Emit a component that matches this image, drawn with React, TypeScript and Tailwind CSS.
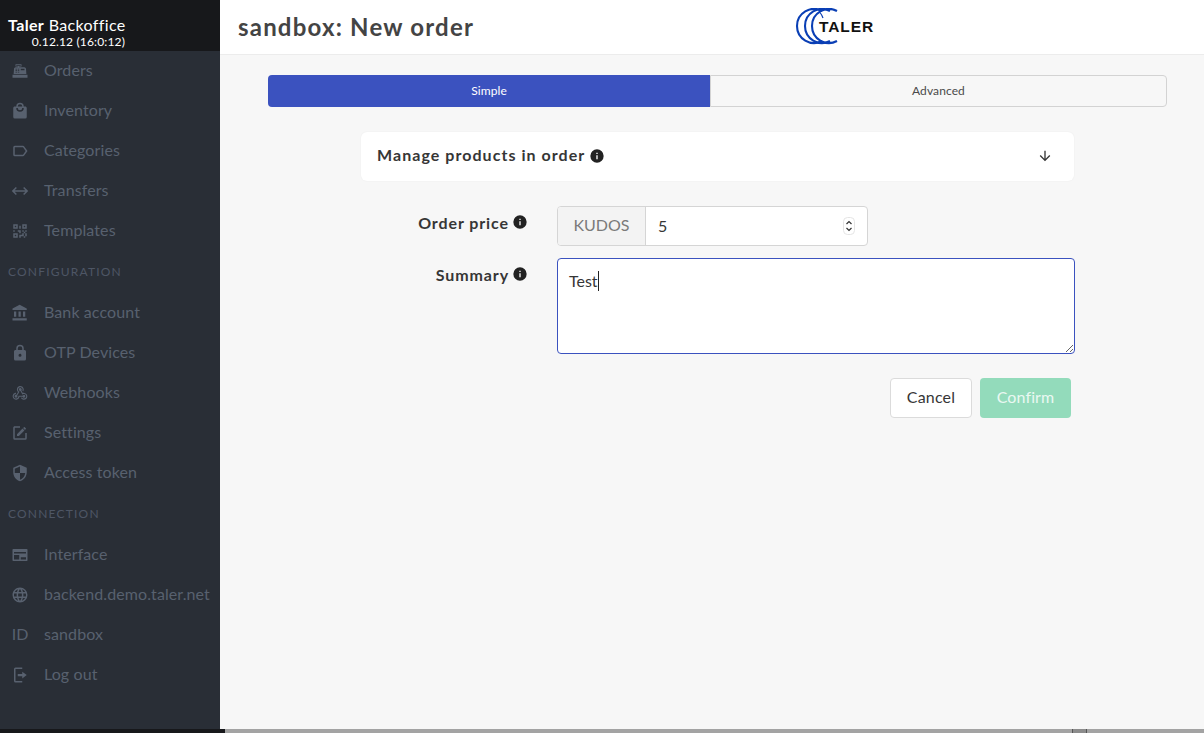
const paths = {
  orders:
    "M2,17H22V21H2V17M6.25,7H9V6H6V3H14V6H11V7H17.8C18.8,7 19.8,8 20,9L20.5,16H3.5L4.05,9C4.05,8 5.05,7 6.25,7M13,9V11H18V9H13M6,9V10H8V9H6M9,9V10H11V9H9M6,11V12H8V11H6M9,11V12H11V11H9M6,13V14H8V13H6M9,13V14H11V13H9M7,4V5H13V4H7Z",
  inventory:
    "M12,13A5,5 0 0,1 7,8H9A3,3 0 0,0 12,11A3,3 0 0,0 15,8H17A5,5 0 0,1 12,13M12,3A3,3 0 0,1 15,6H9A3,3 0 0,1 12,3M19,6H17A5,5 0 0,0 12,1A5,5 0 0,0 7,6H5C3.89,6 3,6.89 3,8V20A2,2 0 0,0 5,22H19A2,2 0 0,0 21,20V8C21,6.89 20.1,6 19,6Z",
  categories:
    "M17.63,5.84C17.27,5.33 16.67,5 16,5H5A2,2 0 0,0 3,7V17A2,2 0 0,0 5,19H16C16.67,19 17.27,18.66 17.63,18.15L22,12L17.63,5.84M16,17H5V7H16L19.55,12L16,17Z",
  transfers:
    "M6.45,17.45L1,12L6.45,6.55L7.86,7.96L4.83,11H19.17L16.14,7.96L17.55,6.55L23,12L17.55,17.45L16.14,16.04L19.17,13H4.83L7.86,16.04L6.45,17.45Z",
  templates:
    "M3,11H5V13H3V11M11,5H13V9H11V5M9,11H13V15H11V13H9V11M15,11H17V13H19V11H21V13H19V15H21V19H19V21H17V19H13V21H11V17H15V15H17V13H15V11M19,19V15H17V19H19M15,3H21V9H15V3M17,5V7H19V5H17M3,3H9V9H3V3M5,5V7H7V5H5M3,15H9V21H3V15M5,17V19H7V17H5Z",
  bank: "M11.5,1L2,6V8H21V6M16,10V17H19V10M2,22H21V19H2M10,10V17H13V10M4,10V17H7V10H4Z",
  lock: "M12,17A2,2 0 0,0 14,15C14,13.89 13.1,13 12,13A2,2 0 0,0 10,15A2,2 0 0,0 12,17M18,8A2,2 0 0,1 20,10V20A2,2 0 0,1 18,22H6A2,2 0 0,1 4,20V10C4,8.89 4.9,8 6,8H7V6A5,5 0 0,1 12,1A5,5 0 0,1 17,6V8H18M12,3A3,3 0 0,0 9,6V8H15V6A3,3 0 0,0 12,3Z",
  webhook:
    "M10.46,19C9,21.07 6.15,21.59 4.09,20.15C2.04,18.71 1.56,15.84 3,13.75C3.87,12.5 5.21,11.83 6.58,11.77L6.63,13.2C5.72,13.27 4.84,13.74 4.27,14.56C3.27,16 3.58,17.94 4.95,18.91C6.33,19.87 8.26,19.5 9.26,18.07C9.57,17.62 9.75,17.13 9.82,16.63V15.62L15.4,15.58L15.47,15.47C16,14.55 17.15,14.23 18.05,14.75C18.95,15.27 19.26,16.43 18.73,17.35C18.2,18.26 17.04,18.58 16.14,18.06C15.73,17.83 15.44,17.46 15.31,17.04L11.24,17.06C11.13,17.73 10.87,18.38 10.46,19M17.74,11.86C20.27,12.17 22.07,14.44 21.76,16.93C21.45,19.43 19.15,21.2 16.62,20.89C15.13,20.71 13.9,19.86 13.19,18.68L14.43,17.96C14.92,18.73 15.75,19.28 16.75,19.41C18.5,19.62 20.05,18.43 20.26,16.76C20.47,15.09 19.23,13.56 17.5,13.35C16.96,13.29 16.44,13.36 15.97,13.53L15.12,13.97L12.54,9.2H12.32C11.26,9.16 10.44,8.29 10.47,7.25C10.5,6.21 11.4,5.4 12.45,5.44C13.5,5.5 14.33,6.37 14.3,7.41C14.28,7.85 14.11,8.25 13.84,8.56L15.74,12.05C16.36,11.85 17.04,11.78 17.74,11.86M8.25,9.14C7.25,6.79 8.31,4.1 10.62,3.12C12.94,2.14 15.62,3.25 16.62,5.6C17.21,6.97 17.09,8.47 16.42,9.67L15.18,8.95C15.6,8.14 15.67,7.15 15.27,6.22C14.6,4.62 12.78,3.85 11.23,4.5C9.67,5.16 8.97,7 9.63,8.62C9.91,9.28 10.4,9.8 11,10.16L11.38,10.37L8.29,15.31C8.32,15.36 8.36,15.42 8.39,15.5C8.88,16.41 8.54,17.56 7.62,18.05C6.71,18.54 5.56,18.18 5.06,17.24C4.57,16.31 4.91,15.16 5.83,14.67C6.22,14.46 6.65,14.41 7.06,14.5L9.37,10.73C8.9,10.3 8.5,9.76 8.25,9.14Z",
  settings:
    "M5,3C3.89,3 3,3.89 3,5V19A2,2 0 0,0 5,21H19A2,2 0 0,0 21,19V12H19V19H5V5H12V3H5M17.78,4C17.61,4 17.43,4.07 17.3,4.2L16.08,5.41L18.58,7.91L19.8,6.7C20.06,6.44 20.06,6 19.8,5.75L18.25,4.2C18.12,4.07 17.95,4 17.78,4M15.37,6.12L8,13.5V16H10.5L17.87,8.62L15.37,6.12Z",
  token:
    "M12,12H19C18.47,16.11 15.72,19.78 12,20.92V12H5V6.3L12,3.19M12,1L3,5V11C3,16.55 6.84,21.73 12,23C17.16,21.73 21,16.55 21,11V5L12,1Z",
  iface:
    "M2,5A1,1 0 0,1 3,4H21A1,1 0 0,1 22,5V19A1,1 0 0,1 21,20H3A1,1 0 0,1 2,19V5ZM4,8V10H20V8H4ZM4,12V18H11V12H4ZM13,15V18H20V15H13Z",
  web: "M16.36,14C16.44,13.34 16.5,12.68 16.5,12C16.5,11.32 16.44,10.66 16.36,10H19.74C19.9,10.64 20,11.31 20,12C20,12.69 19.9,13.36 19.74,14M14.59,19.56C15.19,18.45 15.65,17.25 15.97,16H18.92C17.96,17.65 16.43,18.93 14.59,19.56M14.34,14H9.66C9.56,13.34 9.5,12.68 9.5,12C9.5,11.32 9.56,10.65 9.66,10H14.34C14.43,10.65 14.5,11.32 14.5,12C14.5,12.68 14.43,13.34 14.34,14M12,19.96C11.17,18.76 10.5,17.43 10.09,16H13.91C13.5,17.43 12.83,18.76 12,19.96M8,8H5.08C6.03,6.34 7.57,5.06 9.4,4.44C8.8,5.55 8.35,6.75 8,8M5.08,16H8C8.35,17.25 8.8,18.45 9.4,19.56C7.57,18.93 6.03,17.65 5.08,16M4.26,14C4.1,13.36 4,12.69 4,12C4,11.31 4.1,10.64 4.26,10H7.64C7.56,10.66 7.5,11.32 7.5,12C7.5,12.68 7.56,13.34 7.64,14M12,4.03C12.83,5.23 13.5,6.57 13.91,8H10.09C10.5,6.57 11.17,5.23 12,4.03M18.92,8H15.97C15.65,6.75 15.19,5.55 14.59,4.44C16.43,5.07 17.96,6.34 18.92,8M12,2C6.47,2 2,6.5 2,12A10,10 0 0,0 12,22A10,10 0 0,0 22,12A10,10 0 0,0 12,2Z",
  logout:
    "M6,2H15V4H6V20H15V22H6A2,2 0 0,1 4,20V4A2,2 0 0,1 6,2ZM15,7.5L21,12L15,16.5V13.5H9V10.5H15V7.5Z",
  info: "M13,9H11V7H13M13,17H11V11H13M12,2A10,10 0 0,0 2,12A10,10 0 0,0 12,22A10,10 0 0,0 22,12A10,10 0 0,0 12,2Z",
  arrowDown:
    "M11,4H13V16L18.5,10.5L19.92,11.92L12,19.84L4.08,11.92L5.5,10.5L11,16V4Z",
};

type Entry = { icon?: string; id?: boolean; label: string };

const firstMenu: Entry[] = [
  { icon: paths.orders, label: "Orders" },
  { icon: paths.inventory, label: "Inventory" },
  { icon: paths.categories, label: "Categories" },
  { icon: paths.transfers, label: "Transfers" },
  { icon: paths.templates, label: "Templates" },
];

const configMenu: Entry[] = [
  { icon: paths.bank, label: "Bank account" },
  { icon: paths.lock, label: "OTP Devices" },
  { icon: paths.webhook, label: "Webhooks" },
  { icon: paths.settings, label: "Settings" },
  { icon: paths.token, label: "Access token" },
];

const connectionMenu: Entry[] = [
  { icon: paths.iface, label: "Interface" },
  { icon: paths.web, label: "backend.demo.taler.net" },
  { id: true, label: "sandbox" },
  { icon: paths.logout, label: "Log out" },
];

const Icon = ({ d, className }: { d: string; className: string }) => (
  <svg viewBox="0 0 24 24" className={className} fill="currentColor" fillRule="evenodd">
    <path d={d} />
  </svg>
);

const MenuList = ({ items }: { items: Entry[] }) => (
  <ul>
    {items.map((item) => (
      <li key={item.label} className="flex h-10 items-center text-[#58616f]">
        <span className="flex w-11 shrink-0 justify-center pr-[4px]">
          {item.id ? <span className="pb-[2px] text-base">ID</span> : <Icon d={item.icon!} className="h-[18px] w-[18px]" />}
        </span>
        <span className="pb-[2px] text-base tracking-[0.1px] whitespace-nowrap">{item.label}</span>
      </li>
    ))}
  </ul>
);

const SectionLabel = ({ children }: { children: string }) => (
  <p className="flex h-[42px] items-center pl-2 text-xs tracking-[1.2px] text-[#4e5665]">{children}</p>
);

const InfoIcon = () => <Icon d={paths.info} className="h-4 w-4 text-[#222]" />;

const Logo = () => (
  <svg viewBox="0 0 90 38" className="h-[38px] w-[90px]" fill="none">
    <g stroke="#0a3fb5" strokeWidth="2.1">
      <path d="M32 3A17 17 0 1 0 32 33" />
      <path d="M40 3A17 17 0 1 0 40 33" />
      <path d="M47 3A17 17 0 1 0 47 33" />
      <path d="M30 4.5Q32 7 33 10" strokeWidth="1.2" />
    </g>
    <text x="29" y="24" fontFamily="Liberation Sans" fontSize="15.5" letterSpacing="0.9" fontWeight="700" fill="#111" stroke="#fff" strokeWidth="2" paintOrder="stroke">
      TALER
    </text>
  </svg>
);

const App = () => (
  <div className="flex h-[733px] w-[1204px] flex-col overflow-hidden bg-[#f7f7f7] font-['Lato','Noto_Sans',sans-serif] text-[#363636]">
    <div className="flex h-[729px] shrink-0">
      {/* Sidebar */}
      <aside className="w-[220px] shrink-0 bg-[#292e36]">
        <div className="flex h-[51px] flex-col justify-end bg-[#17181b] pb-[2px] pl-2 text-white">
          <p className="w-[118px] text-base leading-5 tracking-[0.35px] whitespace-nowrap">
            <b>Taler</b> Backoffice
          </p>
          <p className="w-[117px] text-right text-xs leading-[14px] tracking-[0.15px] whitespace-nowrap">0.12.12 (16:0:12)</p>
        </div>
        <MenuList items={firstMenu} />
        <SectionLabel>CONFIGURATION</SectionLabel>
        <MenuList items={configMenu} />
        <SectionLabel>CONNECTION</SectionLabel>
        <MenuList items={connectionMenu} />
      </aside>

      <div className="min-w-0 flex-1">
        {/* Top bar */}
        <header className="flex h-[55px] items-center border-b border-[#ececec] bg-white pl-[18px]">
          <h1 className="w-[552px] text-2xl font-bold tracking-[1.2px] text-[#444]">sandbox: New order</h1>
          <Logo />
        </header>

        {/* Tabs */}
        <div className="mt-5 mr-[37px] ml-12 flex h-8 text-xs tracking-[0.1px]">
          <div className="flex w-[442px] items-center justify-center rounded-l bg-[#3b52bf] text-white">Simple</div>
          <div className="flex flex-1 items-center justify-center rounded-r border border-[#d3d3d3] text-[#4a4a4a]">
            Advanced
          </div>
        </div>

        {/* Form */}
        <div className="mt-[25px] ml-[141px] w-[714px]">
          <div className="flex h-[49px] w-[713px] items-center justify-between rounded-md bg-white pr-[21px] pl-4 shadow-[0_0_2px_rgba(0,0,0,0.06)]">
            <div className="flex items-center gap-1 pb-[2px]">
              <span className="pb-[1px] text-base font-bold tracking-[1.05px] text-[#363636]">Manage products in order</span>
              <InfoIcon />
            </div>
            <span className="pb-[2px]">
              <Icon d={paths.arrowDown} className="h-4 w-4 text-[#363636]" />
            </span>
          </div>

          <div className="mt-[25px] flex h-10">
            <div className="flex w-[167px] items-start justify-end gap-[3px] pt-[6px]">
              <span className="text-base leading-[22px] font-bold tracking-[0.9px]">Order price</span>
              <span className="pt-[2px]">
                <InfoIcon />
              </span>
            </div>
            <div className="ml-[29px] flex h-10 w-[311px] overflow-hidden rounded border border-[#d5d5d5] bg-white">
              <span className="flex w-[88px] items-center justify-center border-r border-[#d5d5d5] bg-[#f3f3f3] pb-[2px] text-base text-[#7a7a7a]">
                KUDOS
              </span>
              <span className="flex flex-1 items-center pl-3 text-base">5</span>
              <span className="flex items-center pr-3">
                <svg viewBox="0 0 12 18" className="h-[18px] w-3" fill="none">
                  <rect x="0.5" y="0.5" width="11" height="17" rx="4" fill="#fff" stroke="#e4e4e4" />
                  <path d="M3.5 7L6 4.5L8.5 7M3.5 11L6 13.5L8.5 11" stroke="#333" strokeWidth="1.2" />
                </svg>
              </span>
            </div>
          </div>

          <div className="mt-3 flex">
            <div className="flex w-[167px] items-start justify-end gap-[3px] pt-[6px]">
              <span className="text-base leading-[22px] font-bold tracking-[0.9px]">Summary</span>
              <span className="pt-[2px]">
                <InfoIcon />
              </span>
            </div>
            <div className="relative ml-[29px] h-24 w-[518px]">
              <textarea
                readOnly
                value="Test"
                className="block h-24 w-full rounded border border-[#3b52bf] bg-white px-[11px] py-[11px] text-base leading-[22px] outline-none"
              />
              <span className="absolute top-[13px] left-[41px] h-[20px] w-px bg-[#222]" />
            </div>
          </div>

          <div className="mt-6 flex justify-end gap-2 pr-[4px]">
            <div className="flex h-10 w-[82px] items-center justify-center rounded border border-[#dbdbdb] bg-white pb-[2px] text-base tracking-[0.2px]">
              Cancel
            </div>
            <div className="flex h-10 w-[91px] items-center justify-center rounded bg-[#93dbbb] pb-[2px] text-base tracking-[0.1px] text-[#eaf8f2]">
              Confirm
            </div>
          </div>
        </div>
      </div>
    </div>

    {/* Strip of the window behind */}
    <div className="flex h-1 shrink-0">
      <div className="w-[225px] bg-[#17181b]" />
      <div className="w-[847px] bg-[#a3a3a3]" />
      <div className="w-[15px] border-x border-[#555] bg-[#8c8c8c]" />
      <div className="flex-1 bg-[#a3a3a3]" />
    </div>
  </div>
);

export default App;
